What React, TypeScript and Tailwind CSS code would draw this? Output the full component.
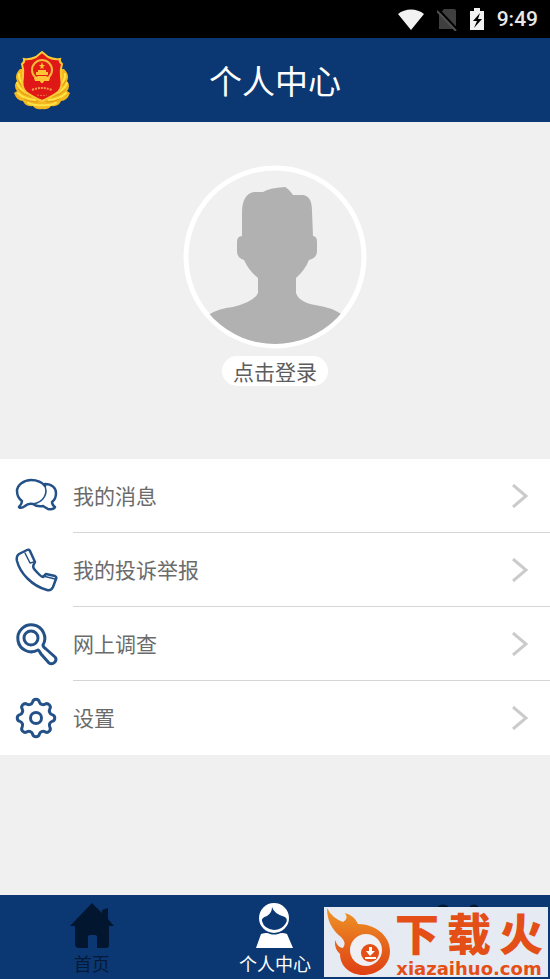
import type { ReactNode } from 'react'

const NAVY = '#0b3872'

function StatusBar() {
  return (
    <div className="flex h-[38px] items-center justify-end bg-black pr-3 text-[#e8e8e8]">
      <svg className="mr-3 h-6 w-7" viewBox="0 0 28 24" fill="#f2f2f2">
        <path d="M1 7C8 1 20 1 27 7L14 23Z" />
      </svg>
      <svg className="mr-3 h-6 w-5" viewBox="0 0 20 24">
        <path d="M7 2h10q2 0 2 2v18H2V8Z" fill="#3f3f3f" />
        <path d="M1 2l19 20" stroke="#000" strokeWidth="2" />
        <path d="M0 4l19 20" stroke="#505050" strokeWidth="2" />
      </svg>
      <svg className="mr-3 h-6 w-4" viewBox="0 0 16 24">
        <path d="M5 1h6v3h4v19H1V4h4Z" fill="#f2f2f2" />
        <path d="M11 6L4 14h4l-3 7 8-9H9Z" fill="#000" />
      </svg>
      <span className="font-[Roboto,'Noto_Sans',sans-serif] text-[21px] leading-6 font-medium">9:49</span>
    </div>
  )
}

function Emblem() {
  return (
    <svg className="h-[60px] w-14" viewBox="0 0 56 60">
      <path
        d="M6 19Q0 25 3 31Q-1 36 3 41L0 43Q3 51 9 51Q11 57 19 56Q22 60 28 59Q34 60 37 56Q45 57 47 51Q53 51 56 43L53 41Q57 36 53 31Q56 25 50 19Z"
        fill="#f3b81f"
      />
      <g fill="none" stroke="#ffe344" strokeWidth="2" strokeLinecap="round">
        <path d="M5 24q-1 7 7 13M3 33q3 8 13 11M4 43q6 6 17 7M14 53q7 3 14 2M51 24q1 7-7 13M53 33q-3 8-13 11M52 43q-6 6-17 7M42 53q-7 3-14 2" />
      </g>
      <g fill="none" stroke="#e09a18" strokeWidth="1">
        <path d="M4 30q2 6 9 10M4 39q5 6 14 8M10 49q6 3 14 3M52 30q-2 6-9 10M52 39q-5 6-14 8M46 49q-6 3-14 3" />
      </g>
      <path
        d="M28 2L34 7Q40 10 46 9Q45 12 48 14Q46 20 47 27Q49 37 44 42Q39 46 28 51Q17 46 12 42Q7 37 9 27Q10 20 8 14Q11 12 10 9Q16 10 22 7Z"
        fill="#df1716"
        stroke="#f9c936"
        strokeWidth="2"
      />
      <circle cx="28" cy="20" r="10" fill="#e31b15" stroke="#f5b93a" strokeWidth="2" />
      <path
        d="M28 12l1 3h2l-2 2 1 2-2-1-2 1 1-2-2-2h2ZM22 22h2v-2h8v2h2v3H22ZM20 28l4-2h8l4 2-1 3h-5l-1 2h-2l-1-2h-5Z"
        fill="#ffc436"
      />
      <path d="M18 40q10-4 20 0" fill="none" stroke="#f59a4b" strokeWidth="2" strokeDasharray="2 1" />
      <path d="M23 45q5 1 10 0" fill="none" stroke="#f0723b" strokeWidth="1" strokeDasharray="2 1" />
    </svg>
  )
}

function Avatar() {
  return (
    <svg className="h-[184px] w-[184px]" viewBox="0 0 184 184">
      <defs>
        <clipPath id="avatar-clip">
          <circle cx="92" cy="92" r="87" />
        </clipPath>
      </defs>
      <circle cx="92" cy="92" r="89" fill="#f0f0f0" stroke="#fff" strokeWidth="5" />
      <path
        clipPath="url(#avatar-clip)"
        fill="#b1b1b1"
        d="M59 71V48Q59 29 71 27H80Q86 23 102 22Q105 23 110 30H120Q129 31 129 46L130 71Q134 71 134 77V86Q134 93 126 95Q122 105 113 113V128Q116 137 132 140Q148 142 160 150L150 185H30L23 151Q36 143 50 142Q71 137 75 128V113Q66 106 61 95Q54 93 54 86V77Q54 71 59 71Z"
      />
    </svg>
  )
}

function LineIcon({ children }: { children: ReactNode }) {
  return (
    <svg
      className="h-[42px] w-[42px] shrink-0"
      viewBox="0 0 42 42"
      fill="none"
      stroke="#245288"
      strokeWidth="3"
      strokeLinecap="round"
      strokeLinejoin="round"
      overflow="visible"
    >
      {children}
    </svg>
  )
}

const MENU = [
  {
    label: '我的消息',
    icon: (
      <LineIcon>
        <path
          d="M30 9C37 9 41 13 41 18Q41 24 37 27Q37 30 40 32Q39 35 33 34L28 31Q22 32 18 29Q13 28 10 31Q6 34 4 32Q7 29 7 26C4 24 2 20 2 16C2 10 9 5 16 5C22 5 27 7 30 11"
          strokeWidth="2.5"
        />
        <path d="M29 9C34 18 29 27 18 29" strokeWidth="1.5" />
      </LineIcon>
    ),
  },
  {
    label: '我的投诉举报',
    icon: (
      <LineIcon>
        <path
          d="M12 1L4 5Q1 7 2 12C5 24 17 37 32 41Q36 42 38 38L41 30Q42 28 40 27L31 25L28 28Q26 28 20 21Q17 18 19 15L20 13L15 2Q14 0 12 1Z"
          strokeWidth="2.5"
        />
        <path d="M10 4L15 14L19 13M28 27L40 30" strokeWidth="1.5" />
      </LineIcon>
    ),
  },
  {
    label: '网上调查',
    icon: (
      <LineIcon>
        <path d="M23 27A13.5 13.5 0 1 1 28 22Q28 24 31 26L40 34Q42 36 40 39Q37 42 34 40L26 31Q24 27 23 27Z" />
        <circle cx="16" cy="15" r="7" />
      </LineIcon>
    ),
  },
  {
    label: '设置',
    icon: (
      <LineIcon>
        <path d="M17.6 4.9A3.5 3.5 0 0 1 24.4 4.9A4 4 0 0 0 30 7.2A3.5 3.5 0 0 1 34.8 12A4 4 0 0 0 37.1 17.6A3.5 3.5 0 0 1 37.1 24.4A4 4 0 0 0 34.8 30A3.5 3.5 0 0 1 30 34.8A4 4 0 0 0 24.4 37.1A3.5 3.5 0 0 1 17.6 37.1A4 4 0 0 0 12 34.8A3.5 3.5 0 0 1 7.2 30A4 4 0 0 0 4.9 24.4A3.5 3.5 0 0 1 4.9 17.6A4 4 0 0 0 7.2 12A3.5 3.5 0 0 1 12 7.2A4 4 0 0 0 17.6 4.9Z" />
        <circle cx="21" cy="21" r="5.5" />
      </LineIcon>
    ),
  },
]

function Menu() {
  return (
    <ul className="bg-white text-[21px] text-[#6b6b6b]">
      {MENU.map((item, i) => (
        <li key={item.label}>
          <button className="flex h-[74px] w-full items-stretch pl-[15px] text-left">
            <span className="mr-4 flex items-center">{item.icon}</span>
            <span
              className={`flex flex-1 items-center justify-between pr-[22px] ${
                i < MENU.length - 1 ? 'border-b border-[#d5d5d5]' : ''
              }`}
            >
              {item.label}
              <svg className="h-6 w-4" viewBox="0 0 16 24" fill="none" stroke="#cbcbcb" strokeWidth="3">
                <path d="M1 1L14 12L1 23" />
              </svg>
            </span>
          </button>
        </li>
      ))}
    </ul>
  )
}

function TabBar() {
  return (
    <nav className="grid h-[84px] grid-cols-3 bg-[#0b3872] text-lg leading-6">
      <button className="flex flex-col items-center pt-2 text-[#051a37]">
        <svg className="h-12 w-11" viewBox="0 0 44 48" fill="#021630">
          <path d="M22 0L32 10V7L38 5V16L44 23H39V42Q39 45 36 45H27V34Q27 32 25 32H20Q18 32 18 34V45H9Q5 45 5 41V23H0Z" />
        </svg>
        首页
      </button>
      <button className="flex flex-col items-center pt-2 text-white" aria-current="page">
        <svg className="h-12 w-11" viewBox="0 0 44 48" fill="#fff">
          <circle cx="21" cy="15" r="15" />
          <path d="M8 31Q14 29 17 31Q21 32 25 31Q29 29 34 31L40 45H3Z" />
          <path d="M19 4Q21 11 32 14Q35 16 33 20Q29 27 21 27Q11 26 9 18Q8 15 14 13Q19 10 19 4Z" fill={NAVY} />
        </svg>
        个人中心
      </button>
      <button className="flex flex-col items-center pt-2" aria-label="更多">
        <svg className="h-12 w-11" viewBox="0 0 44 48" fill="#021630">
          <path d="M2 3Q7 0 12 3V20H2ZM34 3Q38 0 42 3V20H34ZM2 17H42V45H2Z" />
        </svg>
      </button>
    </nav>
  )
}

function SiteBadge() {
  return (
    <div className="absolute right-[2px] bottom-[2px] flex h-[70px] w-56 bg-[#e6eaf2] text-[#e34f16]">
      <svg className="h-[70px] w-[66px] shrink-0" viewBox="0 0 66 70">
        <defs>
          <linearGradient id="flame" x1="0" y1="0" x2="0" y2="1">
            <stop offset="0" stopColor="#ee9527" />
            <stop offset="1" stopColor="#df3f13" />
          </linearGradient>
        </defs>
        <path
          fill="url(#flame)"
          d="M3 1Q8 11 19 15Q25 12 21 6Q31 9 34 17C50 17 66 28 66 44C66 58 54 68 39 68C26 68 16 59 16 47Q10 42 11 33Q14 41 19 41Q23 36 17 30C7 22 3 12 3 1Z"
        />
        <circle cx="42" cy="43" r="16" fill="#f0eff3" />
        <circle cx="46" cy="46" r="9" fill="#e34f16" />
        <path d="M45 40h3v4h3l-5 5-4-5h3ZM41 50h11v2H41Z" fill="#fff" />
      </svg>
      <div className="flex flex-1 flex-col items-center justify-between">
        <span className="flex gap-2 text-[44px] leading-[50px] font-black">
          <span>下</span>
          <span>载</span>
          <span>火</span>
        </span>
        <span className="font-['DejaVu_Sans',sans-serif] text-lg leading-4 font-bold">xiazaihuo.com</span>
      </div>
    </div>
  )
}

export default function App() {
  return (
    <div className="relative flex min-h-screen flex-col bg-[#f0f0f0] font-['Noto_Sans_CJK_SC',sans-serif]">
      <StatusBar />
      <header className="grid h-[84px] grid-cols-[1fr_auto_1fr] items-center bg-[#0b3872] px-[14px]">
        <Emblem />
        <h1 className="text-[33px] leading-10 text-white">个人中心</h1>
      </header>
      <main className="flex-1">
        <section className="flex h-[337px] flex-col items-center pt-[43px]">
          <Avatar />
          <button className="mt-[7px] h-[30px] rounded-full bg-white px-[11px] text-[21px] leading-7 text-[#5c5c5c]">
            点击登录
          </button>
        </section>
        <Menu />
      </main>
      <TabBar />
      <SiteBadge />
    </div>
  )
}
